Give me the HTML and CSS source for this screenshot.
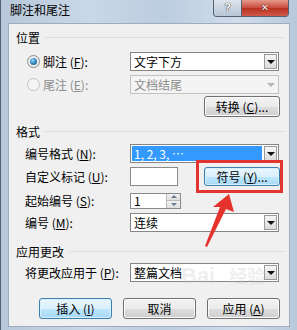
FILE: index.html
```html
<!DOCTYPE html>
<html>
<head>
    <title>脚注和尾注</title>
    <link rel="stylesheet" href="styles.css">
</head>
<body>
<div class="window">
    <div class="titlebar">
        <span class="title">脚注和尾注</span>
        <div class="caption">
            <div class="cap-help">?</div>
            <div class="cap-close">✕</div>
        </div>
    </div>
    <div class="client">
        <div class="group-title first"><span>位置</span><i></i></div>
        <div class="row r-b">
            <div class="radio-lbl"><span class="radio checked"></span>脚注 (<u>F</u>):</div>
            <div class="combo">
                <div class="val">文字下方</div>
                <div class="drop"></div>
            </div>
        </div>
        <div class="row r-c">
            <div class="radio-lbl disabled"><span class="radio"></span>尾注 (<u>E</u>):</div>
            <div class="combo disabled">
                <div class="val">文档结尾</div>
                <div class="drop"></div>
            </div>
        </div>
        <div class="row r-d">
            <div class="btn push-right">转换 (<u>C</u>)...</div>
        </div>

        <div class="group-title r-e"><span>格式</span><i></i></div>
        <div class="row r-f">
            <div class="lbl">编号格式 (<u>N</u>):</div>
            <div class="combo">
                <div class="val selected">1, 2, 3, …</div>
                <div class="drop"></div>
            </div>
        </div>
        <div class="row r-g">
            <div class="lbl">自定义标记 (<u>U</u>):</div>
            <div class="textbox"></div>
            <div class="btn focus push-right">符号 (<u>Y</u>)...</div>
        </div>
        <div class="row r-h">
            <div class="lbl">起始编号 (<u>S</u>):</div>
            <div class="spin">
                <div class="spin-val">1</div>
                <div class="spin-btns">
                    <div class="spin-up"></div>
                    <div class="spin-down"></div>
                </div>
            </div>
        </div>
        <div class="row r-i">
            <div class="lbl">编号 (<u>M</u>):</div>
            <div class="combo">
                <div class="val">连续</div>
                <div class="drop"></div>
            </div>
        </div>

        <div class="group-title r-j"><span>应用更改</span><i></i></div>
        <div class="row r-k">
            <div class="lbl">将更改应用于 (<u>P</u>):</div>
            <div class="combo">
                <div class="val">整篇文档</div>
                <div class="drop"></div>
            </div>
        </div>

        <div class="footer">
            <div class="btn focus">插入 (<u>I</u>)</div>
            <div class="btn">取消</div>
            <div class="btn">应用 (<u>A</u>)</div>
        </div>
    </div>

    <div class="watermark">Bai<span>经验</span></div>
    <div class="highlight-box"></div>
    <svg class="arrow" width="40" height="60" viewBox="0 0 40 60">
        <polygon points="33,0 38,18 30,15 11,53 9,52 24,13 17,13" fill="#e5322d"/>
    </svg>
</div>
</body>
</html>
```

FILE: styles.css
```css
body {
    margin: 0;
    font-family: "Noto Sans CJK SC", "Noto Sans", sans-serif;
    font-size: 12px;
    color: #000;
}

.window {
    position: relative;
    width: 297px;
    height: 330px;
    overflow: hidden;
    box-sizing: border-box;
    border-left: 1px solid #55606e;
    background: linear-gradient(90deg, #b7c8da 0%, #c9d7e6 30%, #bccde0 55%, #cfdcea 80%, #b8c9dc 100%);
}

.titlebar {
    display: flex;
    height: 23px;
}

.title {
    margin-left: 9px;
    margin-top: 2px;
    line-height: 16px;
}

.caption {
    display: flex;
    margin-left: auto;
    margin-right: 8px;
    height: 16px;
    border: 1px solid #56606c;
    border-top: none;
    border-radius: 0 0 4px 4px;
    overflow: hidden;
}

.cap-help {
    width: 27px;
    text-align: center;
    font-family: "Liberation Sans", sans-serif;
    font-size: 11px;
    line-height: 15px;
    font-weight: bold;
    color: #fff;
    text-shadow: 0 0 1px #333, 0 0 1px #333;
    background: linear-gradient(#dde5ee, #b7c5d5);
    border-right: 1px solid #56606c;
}

.cap-close {
    width: 46px;
    text-align: center;
    font-family: "DejaVu Sans", sans-serif;
    font-size: 10px;
    line-height: 15px;
    font-weight: bold;
    color: #fff;
    text-shadow: 0 0 1px #400, 0 0 1px #400;
    background: linear-gradient(#e49a8c, #c8483a 50%, #b8301f 51%, #d0584a);
}

.client {
    margin-left: 7px;
    width: 282px;
    height: 304px;
    box-sizing: border-box;
    border: 1px solid #9eacbd;
    background: #f0f0f0;
    padding-right: 9px;
}

.group-title {
    display: flex;
    align-items: center;
    height: 16px;
    padding-left: 7px;
}

.group-title i {
    flex: 1;
    height: 1px;
    background: #d5dfe5;
    margin-left: 5px;
    margin-right: -4px;
}

.first { margin-top: 5px; }
.r-b { margin-top: 7px; }
.r-c { margin-top: 4px; }
.r-d { margin-top: 3px; height: 21px; }
.r-e { margin-top: 7px; }
.r-f { margin-top: 5px; }
.r-g { margin-top: 4px; }
.r-h { margin-top: 5px; height: 16px; }
.r-i { margin-top: 3px; }
.r-j { margin-top: 11px; }
.r-k { margin-top: 4px; }

.row {
    display: flex;
    align-items: center;
    height: 19px;
}

.lbl {
    width: 121px;
    padding-left: 16px;
    box-sizing: border-box;
    white-space: nowrap;
}

.radio-lbl {
    display: flex;
    align-items: center;
    width: 121px;
    padding-left: 18px;
    box-sizing: border-box;
    white-space: nowrap;
}

.radio-lbl.disabled {
    color: #8d8d8d;
}

.radio {
    width: 11px;
    height: 11px;
    margin-right: 3px;
    border: 1px solid #8e8f8f;
    border-radius: 50%;
    background: radial-gradient(circle, #ffffff 0%, #e0e0e0 100%);
    position: relative;
}

.radio.checked::after {
    content: "";
    position: absolute;
    left: 2px;
    top: 2px;
    width: 7px;
    height: 7px;
    border-radius: 50%;
    background: radial-gradient(circle at 40% 35%, #9fe0f8 0%, #3b8cc5 45%, #0d4c7a 100%);
}

.radio-lbl.disabled .radio {
    border-color: #c4c4c4;
    background: #f4f4f4;
}

.combo {
    display: flex;
    width: 149px;
    height: 19px;
    box-sizing: border-box;
    border: 1px solid #858585;
    background: #fff;
}

.combo .val {
    flex: 1;
    padding-left: 3px;
    line-height: 17px;
}

.combo .val.selected {
    margin: 1px;
    background: #3399ff;
    color: #fff;
    line-height: 15px;
    padding-left: 2px;
}

.combo.disabled {
    border-color: #c2c2c2;
    background: #f4f4f4;
    color: #8d8d8d;
}

.drop {
    width: 13px;
    margin: 1px;
    box-sizing: border-box;
    border: 1px solid #9b9b9b;
    background: linear-gradient(#f6f6f6, #dcdcdc);
    display: flex;
    align-items: center;
    justify-content: center;
}

.drop::after {
    content: "";
    border-left: 4px solid transparent;
    border-right: 4px solid transparent;
    border-top: 4px solid #111;
}

.combo.disabled .drop {
    border-color: transparent;
    background: none;
}

.combo.disabled .drop::after {
    border-top-color: #b5b5b5;
}

.btn {
    width: 73px;
    height: 21px;
    box-sizing: border-box;
    border: 1px solid #707070;
    border-radius: 3px;
    background: linear-gradient(#f2f2f2 0%, #ebebeb 50%, #dddddd 51%, #cfcfcf 100%);
    box-shadow: inset 0 0 0 1px #fbfbfb;
    text-align: center;
    line-height: 19px;
    white-space: nowrap;
}

.btn.focus {
    border-color: #3c7fb1;
    background: linear-gradient(#eaf6fd 0%, #d9f0fc 50%, #bee6fd 51%, #a7d9f5 100%);
    box-shadow: inset 0 0 0 1px #d6f0fb;
}

.push-right {
    margin-left: auto;
    width: 76px;
}

.r-g .btn {
    height: 19px;
    line-height: 17px;
}

.textbox {
    width: 48px;
    height: 19px;
    box-sizing: border-box;
    border: 1px solid #8a8a8a;
    background: #fff;
}

.spin {
    display: flex;
    width: 51px;
    height: 16px;
    box-sizing: border-box;
    border: 1px solid #8a8a8a;
    background: #fff;
}

.spin-val {
    flex: 1;
    padding-left: 3px;
    line-height: 14px;
}

.spin-btns {
    width: 13px;
    display: flex;
    flex-direction: column;
    border-left: 1px solid #b9b9b9;
}

.spin-up,
.spin-down {
    flex: 1;
    display: flex;
    align-items: center;
    justify-content: center;
    background: linear-gradient(#f3f3f3, #dedede);
}

.spin-up {
    border-bottom: 1px solid #b9b9b9;
}

.spin-up::after {
    content: "";
    border-left: 3px solid transparent;
    border-right: 3px solid transparent;
    border-bottom: 3px solid #6a7a8a;
}

.spin-down::after {
    content: "";
    border-left: 3px solid transparent;
    border-right: 3px solid transparent;
    border-top: 3px solid #6a7a8a;
}

.footer {
    display: flex;
    justify-content: flex-end;
    gap: 11px;
    margin-top: 16px;
}

.watermark {
    position: absolute;
    left: 180px;
    top: 262px;
    font-family: "Liberation Sans", sans-serif;
    font-size: 22px;
    font-weight: bold;
    color: rgba(200, 200, 200, 0.3);
}

.watermark span {
    font-family: "Noto Sans CJK SC", sans-serif;
    font-size: 18px;
    margin-left: 14px;
}

.highlight-box {
    position: absolute;
    left: 195px;
    top: 160px;
    width: 87px;
    height: 33px;
    box-sizing: border-box;
    border: 3px solid #e23430;
}

.arrow {
    position: absolute;
    left: 195px;
    top: 194px;
}
```
